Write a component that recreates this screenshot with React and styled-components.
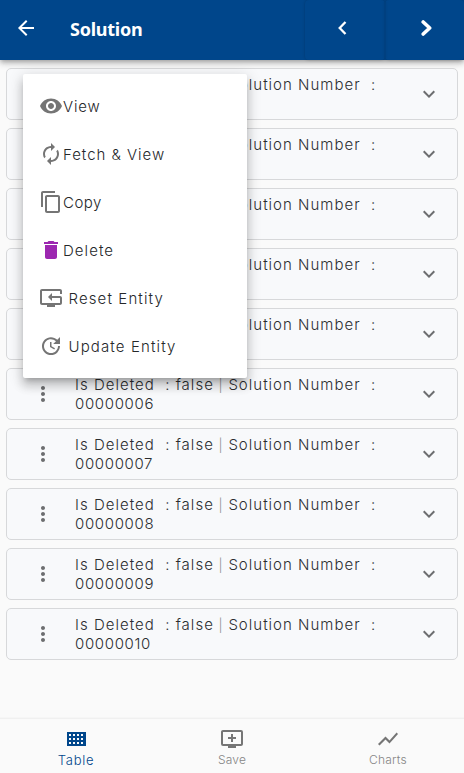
import React from 'react';
import styled, { createGlobalStyle } from 'styled-components';
import {
  MdArrowBack, MdRemoveRedEye, MdAutorenew, MdContentCopy,
  MdDelete, MdResetTv, MdUpdate, MdMoreVert, MdKeyboardArrowDown, MdAddToQueue, MdShowChart,
} from 'react-icons/md';

const Global = createGlobalStyle`
  * { box-sizing: border-box; }
  body { margin: 0; background: #fafafa; overflow: hidden; font-family: Inter, "Liberation Sans", sans-serif; color: #25272a; }
  svg { display: block; flex: none; }
`;
const Page = styled.div`
  position: relative;
  display: flex;
  flex-direction: column;
  height: 773px;
`;
const Header = styled.header`
  display: flex;
  height: 60px;
  background: #00468b;
  color: #fff;
  box-shadow: 0 2px 4px -1px rgba(0,0,0,.2), 0 4px 5px rgba(0,0,0,.14), 0 1px 10px rgba(0,0,0,.12);
`;
const Back = styled.div`
  padding: 16px 0 0 14px;
  width: 70px;
`;
const Title = styled.h1`
  flex: 1;
  margin: 0;
  font: 700 18px/59px "Noto Sans", sans-serif;
  letter-spacing: -0.25px;
`;
const NavButton = styled.div`
  width: ${p => p.$width}px;
  height: 60px;
  padding: ${p => p.$pad};
  border-radius: 4px;
  box-shadow: 0 0 3px rgba(0,0,0,.22);
`;
const List = styled.main`
  flex: 1;
  display: flex;
  flex-direction: column;
  gap: 8px;
  padding: 8px 6px;
`;
const Card = styled.div`
  display: flex;
  height: 52px;
  border: 1px solid #d7d8da;
  border-radius: 5px;
  background: #f8f9fb;
  color: #6d6e70;
`;
const More = styled.div`
  width: 68px;
  padding: 13px 0 0 24px;
`;
const CardText = styled.div`
  flex: 1;
  padding-top: 6px;
  color: #2b2d30;
  font-size: 15px;
  font-weight: 350;
  line-height: 19px;
  white-space: pre;
`;
const Line = styled.div`
  height: 19px;
  letter-spacing: ${p => p.$spacing}px;
`;
const Separator = styled.span`
  margin-left: -0.5px;
  margin-right: -0.5px;
  color: #8f9092;
  font-size: 13px;
  line-height: 1;
`;
const Expand = styled.div`
  padding: 13px 16px 0 0;
`;
const Menu = styled.div`
  position: absolute;
  left: 23px;
  top: 74px;
  width: 224px;
  height: 304px;
  padding: 8px 0;
  background: #fff;
  border-radius: 2px;
  box-shadow: 0 5px 5px -3px rgba(0,0,0,.2), 0 8px 10px 1px rgba(0,0,0,.14), 0 3px 14px 2px rgba(0,0,0,.12);
`;
const MenuItem = styled.div`
  display: flex;
  align-items: center;
  gap: ${p => p.$gap || 0}px;
  height: 48px;
  padding-left: 16px;
  color: ${p => p.$color || '#757575'};
`;
const MenuLabel = styled.span`
  color: #25272a;
  font-size: 15px;
  font-weight: 350;
  padding-top: 2px;
  line-height: 18px;
  letter-spacing: ${p => p.$spacing}px;
`;
const Tabs = styled.nav`
  display: flex;
  justify-content: center;
  height: 55px;
  border-top: 1px solid #f0f0f0;
  box-shadow: 0 -1px 1px rgba(0,0,0,.015);
`;
const Tab = styled.div`
  display: flex;
  flex: none;
  flex-direction: column;
  align-items: center;
  width: 156px;
  padding-top: 8px;
  color: ${p => p.$active ? '#00468b' : '#757575'};
`;
const TabLabel = styled.span`
  font-size: ${p => p.$active ? 13 : 12}px;
  font-weight: 350;
  line-height: 18px;
  letter-spacing: ${p => p.$spacing}px;
  color: ${p => p.$active ? '#00468b' : '#858585'};
`;

const GridIcon = () => (
  <svg width="24" height="24" viewBox="0 0 24 24">
    <path fill="currentColor" d="M3 5h19v14H3z" />
    <path fill="#fafafa" d="M5 7h2v2H5zM9 7h2v2H9zM13 7h2v2h-2zM17 7h2v2h-2zM5 11h2v2H5zM9 11h2v2H9zM13 11h2v2h-2zM17 11h2v2h-2zM5 15h2v2H5zM9 15h2v2H9zM13 15h2v2h-2zM17 15h2v2h-2z" />
  </svg>
);
const PreviousIcon = () => (
  <svg width="10" height="16" viewBox="0 0 10 16">
    <path d="M8.5 2 2.7 8l5.8 6" fill="none" stroke="currentColor" strokeWidth="2.3" />
  </svg>
);
const NextIcon = () => (
  <svg width="12" height="16" viewBox="0 0 12 16">
    <path d="M2.2 2 8.7 8 2.2 14" fill="none" stroke="currentColor" strokeWidth="3.6" strokeLinejoin="round" strokeLinecap="round" />
  </svg>
);

const actions = [
  [MdRemoveRedEye, 'View', 0.8],
  [MdAutorenew, 'Fetch & View', 0.97],
  [MdContentCopy, 'Copy', 0.5],
  [MdDelete, 'Delete', 1.05, 0, '#9c27b0'],
  [MdResetTv, 'Reset Entity', 1.12, 5.5],
  [MdUpdate, 'Update Entity', 1.12, 5.5],
];
const rows = Array.from({ length: 10 }, (_, i) => String(i + 1).padStart(8, '0'));

export default function App() {
  return (
    <>
      <Global />
      <Page>
        <Header>
          <Back><MdArrowBack size={24} /></Back>
          <Title>Solution</Title>
          <NavButton $width={80} $pad="20px 0 0 32px"><PreviousIcon /></NavButton>
          <NavButton $width={79} $pad="20px 0 0 36px"><NextIcon /></NavButton>
        </Header>
        <List>
          {rows.map(n => (
            <Card key={n}>
              <More><MdMoreVert size={24} /></More>
              <CardText>
                <Line $spacing={1.01}>
                  {'Is Deleted  : false '}<Separator>|</Separator>{' Solution Number  :'}
                </Line>
                <Line $spacing={0.65}>{n}</Line>
              </CardText>
              <Expand><MdKeyboardArrowDown size={24} /></Expand>
            </Card>
          ))}
        </List>
        <Tabs>
          <Tab $active><GridIcon /><TabLabel $active $spacing={0.75}>Table</TabLabel></Tab>
          <Tab><MdAddToQueue size={24} /><TabLabel $spacing={0.2}>Save</TabLabel></Tab>
          <Tab><MdShowChart size={24} /><TabLabel $spacing={0.25}>Charts</TabLabel></Tab>
        </Tabs>
        <Menu>
          {actions.map(([Icon, label, spacing, gap, color]) => (
            <MenuItem key={label} $gap={gap} $color={color}>
              <Icon size={24} /><MenuLabel $spacing={spacing}>{label}</MenuLabel>
            </MenuItem>
          ))}
        </Menu>
      </Page>
    </>
  );
}
